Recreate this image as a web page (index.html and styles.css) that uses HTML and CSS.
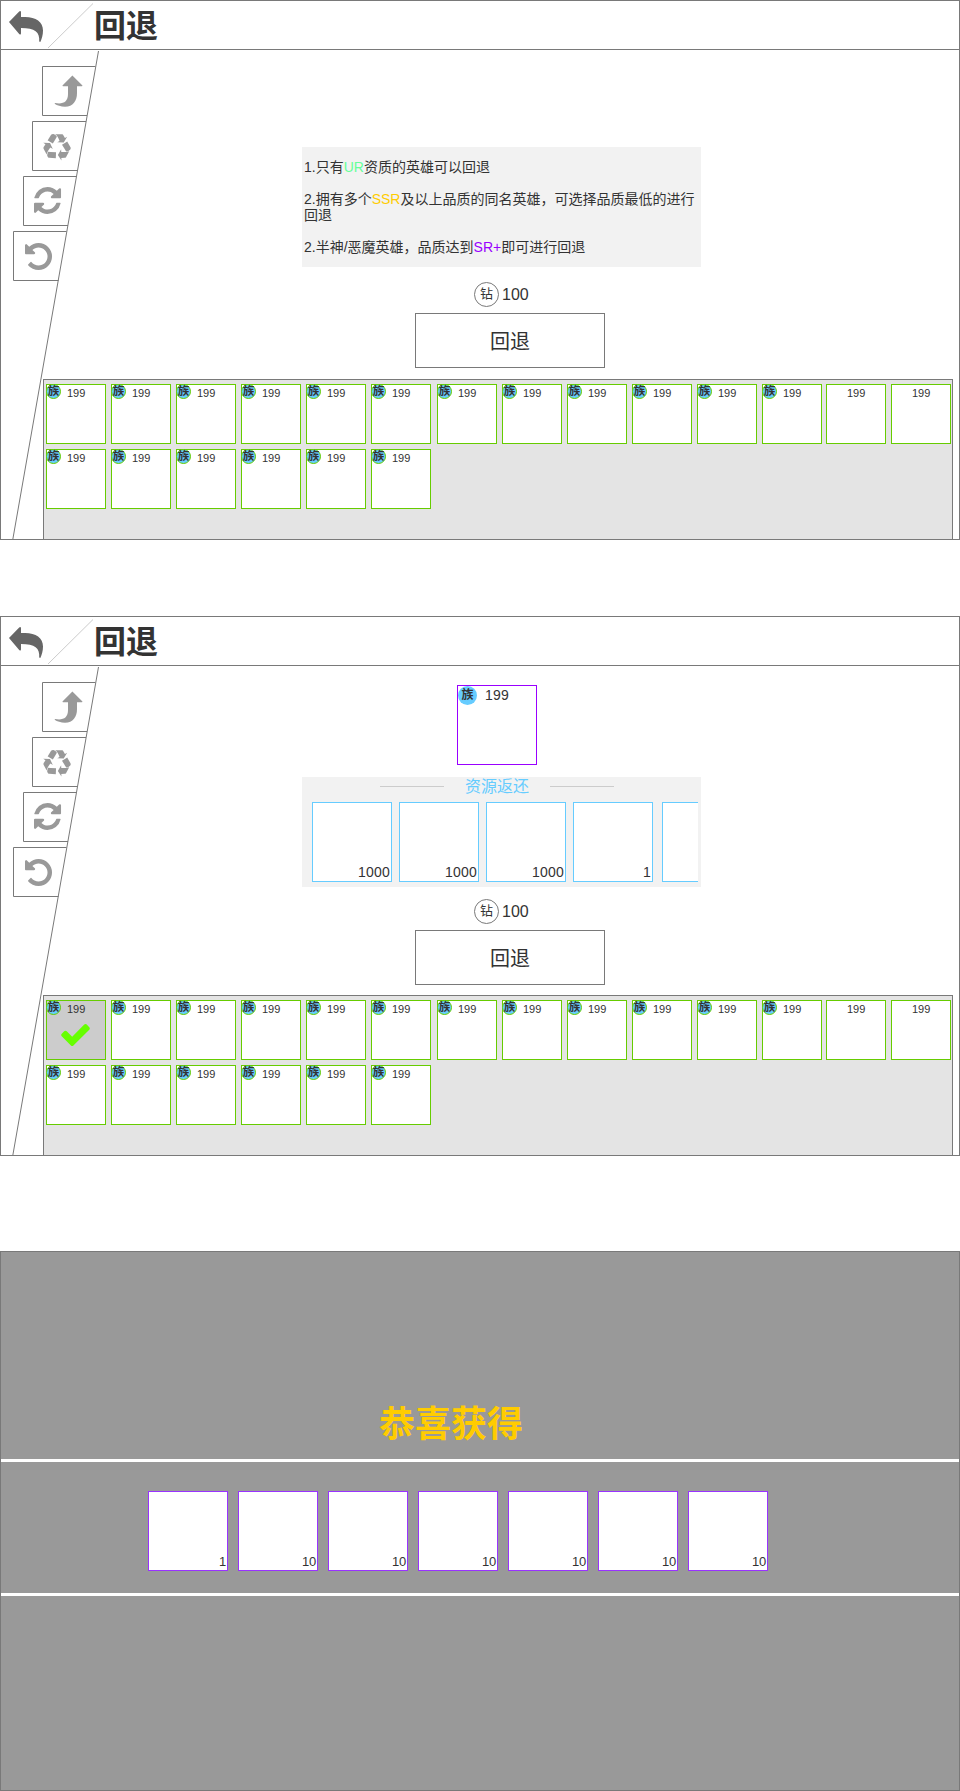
FILE: index.html
```html
<!DOCTYPE html>
<html lang="zh-CN">
<head>
<meta charset="utf-8">
<title>回退</title>
<link rel="stylesheet" href="styles.css">
</head>
<body>
<svg class="defs" aria-hidden="true">
  <symbol id="header-art" viewBox="0 0 93 48">
    <path class="back" d="M8 21 L18.2 10.4 Q20 9.400 20 11.500 V16 H24 C35 16 42 21 42 29.500 C42 34 40.800 38 39.300 41 L38.200 40.600 C39 31 34 27 20 27 V32.300 Q20 34.300 18.200 33 Z"/>
    <path class="slash" d="M47 47 L92 2.500"/>
  </symbol>
  <symbol id="rail-art" viewBox="0 0 100 489">
    <g class="tabs">
      <path d="M95.400 15.500H42.500V64.500H87"/>
      <path d="M86 70.500H32.500V119.500H77.500"/>
      <path d="M76.500 125.500H23.500V174.500H68"/>
      <path d="M66.500 180.500H13.500V229.500H58.500"/>
      <path d="M98.500 0L12.700 489"/>
    </g>
    <g class="glyphs">
      <path d="M72.400 24.400 L82.200 34.300 Q83 35.300 81.700 35.300 H77 V42 C77 50 73 55.700 65 55.700 C61 55.700 57 54.500 54.600 52.800 L55 52 C63 53.500 68 51 68 43 V35.300 H63.200 Q61.900 35.300 62.700 34.300 Z"/>
      <path transform="translate(43 83) scale(.0156)" d="M836 1169l-15 368-2 22-420-29q-36-3-67-31.500t-47-65.500q-11-27-14.500-55t4-65 12-55 21.500-64 19-53q78 12 509 28zm-387-586l180 379-147-92q-63 72-111.500 144.500t-72.500 125-39.500 94.500-18.500 63l-4 21-190-357q-17-26-18-56t6-47l8-18q35-63 114-188l-140-86zm1231 517l-188 359q-12 29-36.500 46.500t-43.500 20.500l-18 4q-71 7-219 12l8 164-230-367 211-362 7 173q170 16 283 5t170-33zm-785-924q-47 63-265 435l-317-187-19-12 225-356q20-31 60-45t80-10q24 2 48.500 12t42 21 41.500 33 36 34.500 36 39.500 32 35zm655 307l212 363q18 37 12.500 76t-27.500 74q-13 20-33 37t-38 28-48.500 22-47 16-51.500 14-46 12q-34-72-265-436l313-195zm-143-226l142-83-220 373-419-20 151-86q-34-89-75-166t-75.500-123.500-64.500-80-47-46.500l-17-13 405 1q31-3 58 10.500t39 28.500l11 15q39 61 112 190z"/>
      <path transform="translate(34 136) scale(.0176)" d="M1511 928q0 5-1 7-64 268-268 434.500t-478 166.500q-146 0-282.500-55t-243.500-157l-129 129q-19 19-45 19t-45-19-19-45v-448q0-26 19-45t45-19h448q26 0 45 19t19 45-19 45l-137 137q71 66 161 102t187 36q134 0 250-65t186-179q11-17 53-117 8-23 30-23h192q13 0 22.500 9.500t9.500 22.500zm25-800v448q0 26-19 45t-45 19h-448q-26 0-45-19t-19-45 19-45l138-138q-148-137-349-137-134 0-250 65t-186 179q-11 17-53 117-8 23-30 23h-199q-13 0-22.500-9.500t-9.500-22.500v-7q65-268 270-434.500t480-166.500q146 0 284 55.500t245 156.500l130-129q19-19 45-19t45 19 19 45z"/>
      <path transform="translate(22.750 189.750) scale(.0176)" d="M1664 896q0 156-61 298t-164 245-245 164-298 61q-172 0-327-72.500t-264-204.500q-7-10-6.500-22.500t8.500-20.500l137-138q10-9 25-9 16 2 23 12 73 95 179 147t225 52q104 0 198.500-40.500t163.500-109.500 109.500-163.500 40.500-198.500-40.500-198.500-109.500-163.500-163.500-109.500-198.500-40.500q-98 0-188 35.500t-160 101.500l137 138q31 30 14 69-17 40-59 40h-448q-26 0-45-19t-19-45v-448q0-42 40-59 39-17 69 14l130 129q107-101 244.500-156.500t284.500-55.500q156 0 298 61t245 164 164 245 61 298z"/>
    </g>
  </symbol>
  <symbol id="check" viewBox="121 274 1550 1248">
    <path d="M1671 566q0 40-28 68l-724 724-136 136q-28 28-68 28t-68-28l-136-136-362-362q-28-28-28-68t28-68l136-136q28-28 68-28t68 28l294 295 656-657q28-28 68-28t68 28l136 136q28 28 28 68z"/>
  </symbol>
</svg>

<section class="screen">
  <header class="bar"><svg class="bar-art"><use href="#header-art"/></svg><h1>回退</h1></header>
  <svg class="rail"><use href="#rail-art"/></svg>
  <main class="stage stage-rules">
    <div class="rules">
      <p>1.只有<span class="ur">UR</span>资质的英雄可以回退</p>
      <p>2.拥有多个<span class="ssr">SSR</span>及以上品质的同名英雄，可选择品质最低的进行回退</p>
      <p>2.半神/恶魔英雄，品质达到<span class="sr">SR+</span>即可进行回退</p>
    </div>
    <div class="cost"><span class="gem">钻</span><span>100</span></div>
    <button class="action">回退</button>
  </main>
  <div class="roster">
    <div class="slot"><i>族</i>199</div><div class="slot"><i>族</i>199</div><div class="slot"><i>族</i>199</div><div class="slot"><i>族</i>199</div><div class="slot"><i>族</i>199</div><div class="slot"><i>族</i>199</div><div class="slot"><i>族</i>199</div>
    <div class="slot"><i>族</i>199</div><div class="slot"><i>族</i>199</div><div class="slot"><i>族</i>199</div><div class="slot"><i>族</i>199</div><div class="slot"><i>族</i>199</div><div class="slot">199</div><div class="slot">199</div>
    <div class="slot"><i>族</i>199</div><div class="slot"><i>族</i>199</div><div class="slot"><i>族</i>199</div><div class="slot"><i>族</i>199</div><div class="slot"><i>族</i>199</div><div class="slot"><i>族</i>199</div>
  </div>
</section>

<section class="screen screen-selected">
  <header class="bar"><svg class="bar-art"><use href="#header-art"/></svg><h1>回退</h1></header>
  <svg class="rail"><use href="#rail-art"/></svg>
  <main class="stage stage-return">
    <div class="hero"><i>族</i>199</div>
    <div class="returns">
      <h2>资源返还</h2>
      <div class="items">
        <div class="item">1000</div><div class="item">1000</div><div class="item">1000</div><div class="item">1</div><div class="item item-cut"></div>
      </div>
    </div>
    <div class="cost"><span class="gem">钻</span><span>100</span></div>
    <button class="action">回退</button>
  </main>
  <div class="roster">
    <div class="slot picked"><i>族</i>199<svg class="tick"><use href="#check"/></svg></div><div class="slot"><i>族</i>199</div><div class="slot"><i>族</i>199</div><div class="slot"><i>族</i>199</div><div class="slot"><i>族</i>199</div><div class="slot"><i>族</i>199</div><div class="slot"><i>族</i>199</div>
    <div class="slot"><i>族</i>199</div><div class="slot"><i>族</i>199</div><div class="slot"><i>族</i>199</div><div class="slot"><i>族</i>199</div><div class="slot"><i>族</i>199</div><div class="slot">199</div><div class="slot">199</div>
    <div class="slot"><i>族</i>199</div><div class="slot"><i>族</i>199</div><div class="slot"><i>族</i>199</div><div class="slot"><i>族</i>199</div><div class="slot"><i>族</i>199</div><div class="slot"><i>族</i>199</div>
  </div>
</section>

<section class="screen screen-reward">
  <h2 class="congrats">恭喜获得</h2>
  <div class="rewards">
    <div class="reward">1</div><div class="reward">10</div><div class="reward">10</div><div class="reward">10</div><div class="reward">10</div><div class="reward">10</div><div class="reward">10</div>
  </div>
</section>
</body>
</html>
```
FILE: styles.css
```css
* { box-sizing: border-box; }
body {
  margin: 0;
  background: #fff;
  color: #333;
  font-family: "Liberation Sans", "Noto Sans CJK SC", sans-serif;
}
h1, h2, p { margin: 0; }
i { font-style: normal; }
.defs { position: absolute; width: 0; height: 0; }

.screen {
  position: relative;
  display: flex;
  flex-direction: column;
  width: 960px;
  height: 540px;
  border: 1px solid #797979;
  overflow: hidden;
}
.screen-selected { margin-top: 76px; }

.bar {
  display: flex;
  flex: none;
  height: 49px;
  border-bottom: 1px solid #797979;
}
.bar-art { width: 93px; height: 48px; }
.back { fill: #666; }
.slash { fill: none; stroke: #ccc; stroke-width: 1; }
.bar h1 { font-size: 32px; line-height: 50px; font-weight: 700; }

.rail { position: absolute; left: -1px; top: 50px; width: 100px; height: 489px; }
.tabs { fill: none; stroke: #797979; stroke-width: 1; }
.glyphs { fill: #999; }

.stage { flex: none; height: 329px; }
.stage-rules { padding-top: 97px; }
.stage-return { padding-top: 19px; }

.rules {
  display: flex;
  flex-direction: column;
  gap: 16px;
  width: 399px;
  height: 120px;
  margin-left: 301px;
  padding: 12px 2px;
  background: #f2f2f2;
  font-size: 14px;
  line-height: 16px;
}
.ur { color: #66ff99; }
.ssr { color: #ffcc00; }
.sr { color: #9900ff; }

.cost {
  display: flex;
  align-items: center;
  gap: 3px;
  height: 25px;
  margin: 15px 0 6px 473px;
  font-size: 16px;
}
.gem {
  width: 25px;
  height: 25px;
  border: 1px solid #797979;
  border-radius: 50%;
  font-size: 13px;
  line-height: 22px;
  text-align: center;
}
.action {
  display: block;
  width: 190px;
  height: 55px;
  margin: 0 0 0 414px;
  padding: 0;
  border: 1px solid #797979;
  background: #fff;
  color: #333;
  font: inherit;
  font-size: 20px;
}

.roster {
  display: flex;
  flex-wrap: wrap;
  align-content: flex-start;
  gap: 5px;
  width: 910px;
  height: 160px;
  margin-left: 42px;
  padding: 4px 0 0 2px;
  border: 1px solid #797979;
  border-bottom: 0;
  background: #e4e4e4;
}
.slot {
  position: relative;
  width: 60px;
  height: 60px;
  padding-left: 20px;
  border: 1px solid #66cc00;
  background: #fff;
  font-size: 11px;
  line-height: 17px;
}
.slot:nth-child(7) { margin-left: 1px; }
.slot:nth-child(13) { margin-left: -1px; }
.slot i {
  position: absolute;
  left: -1px;
  top: -1px;
  display: flex;
  align-items: center;
  justify-content: center;
  width: 15px;
  height: 15px;
  border: 1px solid #66cc00;
  border-radius: 50%;
  background: #66ccff;
  font-size: 11.5px;
  font-weight: 700;
  line-height: 13px;
}
.picked { background: #ccc; }
.tick { position: absolute; left: 14px; top: 22px; width: 29px; height: 23px; fill: #66ff00; }

.hero {
  position: relative;
  width: 80px;
  height: 80px;
  margin-left: 456px;
  padding-left: 27px;
  border: 1px solid #9900ff;
  font-size: 14px;
  letter-spacing: .2px;
  line-height: 18px;
}
.hero i {
  position: absolute;
  left: 0;
  top: 0;
  width: 19px;
  height: 19px;
  border-radius: 50%;
  background: #66ccff;
  font-size: 12px;
  font-weight: 700;
  letter-spacing: 0;
  line-height: 18px;
  text-align: center;
}
.returns {
  width: 399px;
  height: 110px;
  margin: 12px 0 0 301px;
  padding-left: 10px;
  background: #f2f2f2;
}
.returns + .cost { margin-top: 12px; }
.returns h2 {
  display: flex;
  align-items: center;
  width: 234px;
  height: 19px;
  margin: 0 0 6px 68px;
  color: #66ccff;
  font-size: 16px;
  font-weight: 400;
  justify-content: space-between;
  line-height: 19px;
}
.returns h2::before, .returns h2::after { content: ""; width: 64px; height: 1px; background: #ccc; }
.items { display: flex; gap: 7px; width: 386px; overflow: hidden; }
.item {
  flex: none;
  width: 80px;
  height: 80px;
  padding: 61px 1px 0 0;
  border: 1px solid #66ccff;
  background: #fff;
  font-size: 14px;
  letter-spacing: .2px;
  line-height: 16px;
  text-align: right;
}
.item-cut { margin-left: 2px; }

.screen-reward { margin-top: 95px; background: #999; }
.congrats {
  height: 207px;
  padding: 149px 0 0 378px;
  color: #ffcc00;
  font-size: 36px;
  line-height: 48px;
}
.rewards {
  display: flex;
  gap: 10px;
  height: 137px;
  padding: 29px 0 0 147px;
  border: solid #fff;
  border-width: 3px 0;
}
.reward {
  width: 80px;
  height: 80px;
  padding: 62px 1px 0 0;
  border: 1px solid #9933ff;
  background: #fff;
  font-size: 13px;
  letter-spacing: -.2px;
  line-height: 16px;
  text-align: right;
}
```
